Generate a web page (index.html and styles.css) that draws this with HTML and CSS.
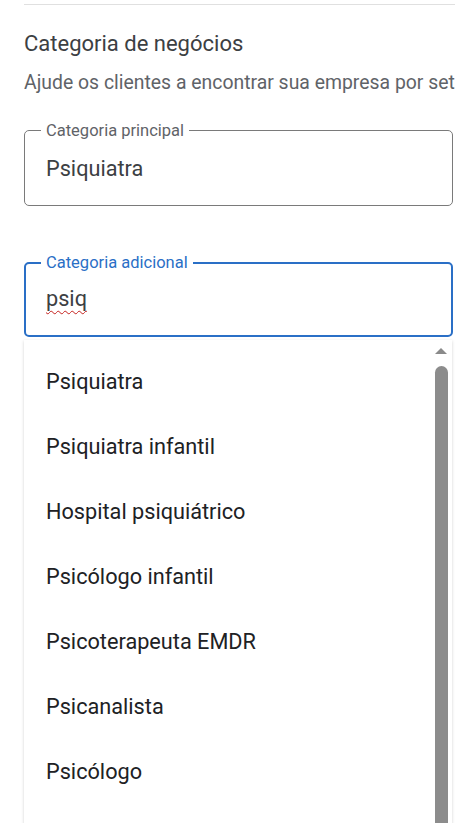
FILE: index.html
```html
<!DOCTYPE html>
<html lang="pt-BR">
<head>
    <meta charset="UTF-8">
    <meta name="viewport" content="width=device-width, initial-scale=1.0">
    <title>Categoria de negócios</title>
    <link rel="stylesheet" href="styles.css">
</head>
<body>
    <div class="page">
        <div class="divider"></div>

        <h2 class="title">Categoria de negócios</h2>
        <p class="hint">Ajude os clientes a encontrar sua empresa por setor.</p>

        <!-- Primary category -->
        <fieldset class="field">
            <legend>Categoria principal</legend>
            <div class="value">Psiquiatra</div>
        </fieldset>

        <!-- Additional category with open suggestions -->
        <fieldset class="field active">
            <legend>Categoria adicional</legend>
            <div class="value"><span class="typo">psiq</span></div>
        </fieldset>

        <div class="menu">
            <ul class="options">
                <li>Psiquiatra</li>
                <li>Psiquiatra infantil</li>
                <li>Hospital psiquiátrico</li>
                <li>Psicólogo infantil</li>
                <li>Psicoterapeuta EMDR</li>
                <li>Psicanalista</li>
                <li>Psicólogo</li>
            </ul>
            <div class="scroll-up"></div>
            <div class="scroll-thumb"></div>
        </div>
    </div>
</body>
</html>
```

FILE: styles.css
```css
body {
    margin: 0;
    padding: 0;
    background: #fff;
    font-family: Roboto, "Liberation Sans", Arial, sans-serif;
}
.page {
    height: 819px;
    padding-left: 24px;
    padding-top: 4px;
    overflow: hidden;
}
.divider {
    height: 1px;
    background: #e0e0e0;
}
.title {
    margin: 0;
    padding-top: 26px;
    font-size: 22px;
    line-height: 26px;
    font-weight: 400;
    color: #3c4043;
}
.hint {
    margin: 0;
    padding-top: 14px;
    font-size: 19.4px;
    line-height: 24px;
    color: #5f6368;
    white-space: nowrap;
    overflow: hidden;
}
.field {
    width: 429px;
    height: 85px;
    box-sizing: border-box;
    margin: 26px 0 0 0;
    padding: 0 16px;
    border: 1px solid #7a7a7a;
    border-radius: 5px;
}
.field legend {
    padding: 0 5px;
    font-size: 16.5px;
    line-height: 19px;
    color: #5f6368;
}
.value {
    padding: 16px 5px 0;
    font-size: 21.7px;
    line-height: 26px;
    color: #3c4043;
}
.field.active {
    margin-top: 47px;
    height: 84px;
    border: 2px solid #2a6fc6;
    padding: 0 15px;
}
.field.active legend {
    color: #2a6fc6;
}
.field.active .value {
    padding-top: 14px;
}
.typo {
    text-decoration: underline wavy #c5221f;
    text-decoration-thickness: 1px;
    text-underline-offset: 4px;
}
.menu {
    position: relative;
    margin-top: 3px;
    width: 428px;
    height: 500px;
    background: #fff;
    box-shadow: 0 1px 3px rgba(0, 0, 0, 0.18);
    overflow: hidden;
}
.options {
    list-style: none;
    margin: 0;
    padding: 9px 0 0;
}
.options li {
    height: 65px;
    line-height: 65px;
    padding-left: 22px;
    font-size: 21.7px;
    color: #202124;
}
.scroll-up {
    position: absolute;
    top: 8px;
    right: 5px;
    width: 0;
    height: 0;
    border-left: 6px solid transparent;
    border-right: 6px solid transparent;
    border-bottom: 6px solid #8a8a8a;
}
.scroll-thumb {
    position: absolute;
    top: 26px;
    right: 4px;
    width: 13px;
    height: 600px;
    background: #8c8c8c;
    border-radius: 7px 7px 0 0;
}
```
